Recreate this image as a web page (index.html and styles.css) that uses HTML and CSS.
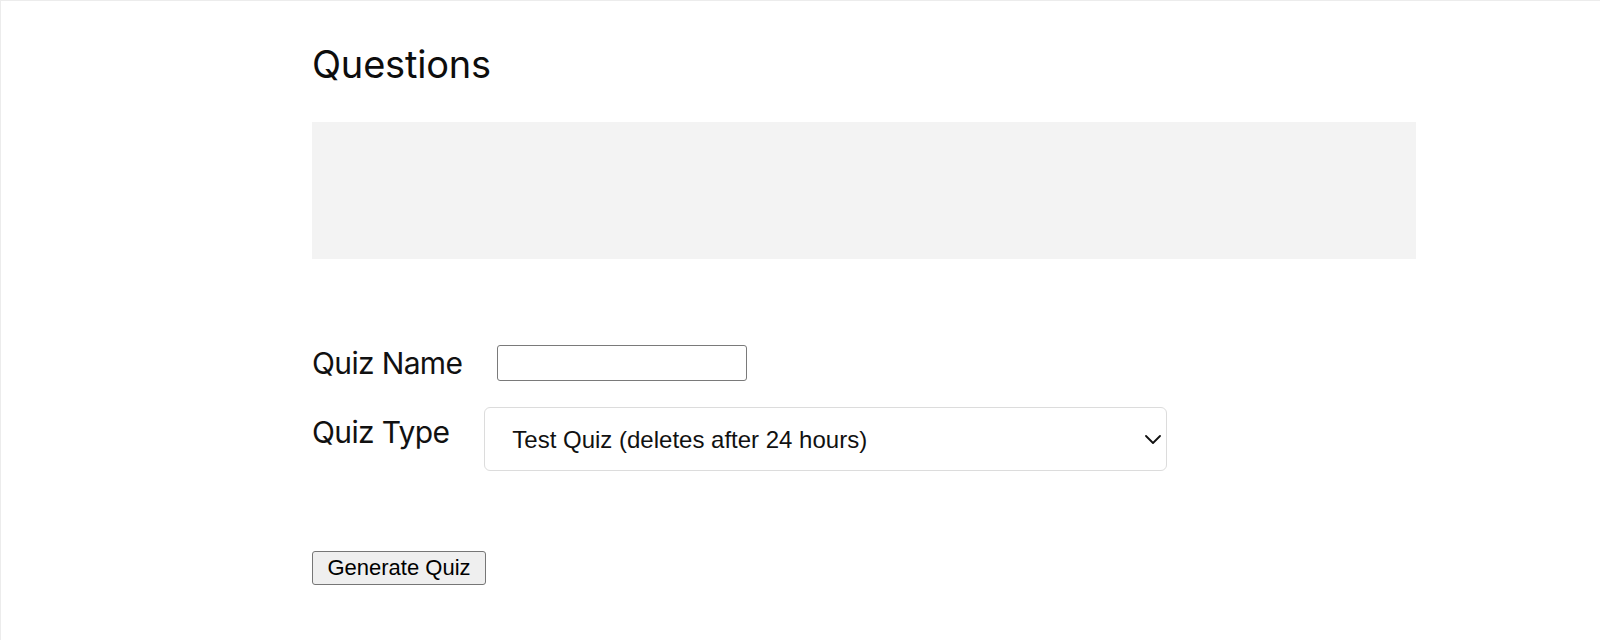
FILE: index.html
```html
<!DOCTYPE html>
<html lang="en">
<head>
<meta charset="utf-8">
<title>Questions</title>
<link rel="stylesheet" href="styles.css">
</head>
<body>
<main class="page">
  <h1 class="title">Questions</h1>
  <div class="questions-box"></div>
  <form class="quiz-form">
    <div class="field field-name">
      <label class="field-label" for="quiz-name">Quiz Name</label>
      <input class="text-input" id="quiz-name" type="text">
    </div>
    <div class="field field-type">
      <label class="field-label" for="quiz-type">Quiz Type</label>
      <div class="select-wrap">
        <select class="select" id="quiz-type">
          <option>Test Quiz (deletes after 24 hours)</option>
          <option>Permanent Quiz</option>
        </select>
        <svg class="chevron" width="16" height="9" viewBox="0 0 16 9" aria-hidden="true">
          <path d="M1 1 L8 8 L15 1" fill="none" stroke="#111" stroke-width="1.8" stroke-linecap="round" stroke-linejoin="round"/>
        </svg>
      </div>
    </div>
    <button class="btn" type="button">Generate Quiz</button>
  </form>
</main>
</body>
</html>
```

FILE: styles.css
```css
* { box-sizing: border-box; }

html, body {
  margin: 0;
  height: 100%;
  background: #fff;
}

body {
  border-top: 1px solid #ececec;
  border-left: 1px solid #ececec;
  font-family: Inter, "Noto Sans", sans-serif;
  color: #111;
}

.page {
  padding-left: 311px;
  width: 1415px;
}

.title {
  margin: 40px 0 0;
  font-size: 38px;
  line-height: 46px;
  font-weight: 400;
  letter-spacing: -0.2px;
  color: #0d0d0d;
}

.questions-box {
  margin-top: 35px;
  height: 137px;
  background: #f3f3f3;
}

.quiz-form {
  margin-top: 86px;
}

.field {
  display: flex;
  gap: 35px;
}

.field-name {
  align-items: center;
}

.field-type {
  margin-top: 22px;
  align-items: flex-start;
}

.field-label {
  font-size: 30px;
  line-height: 36px;
  font-weight: 400;
  letter-spacing: -0.65px;
  color: #111;
}

.field-type .field-label {
  margin-top: 11px;
}

.text-input {
  width: 250px;
  height: 36px;
  border: 1px solid #7a7a7a;
  border-radius: 3px;
  padding: 0 6px;
  font-family: "Liberation Sans", Arial, sans-serif;
  font-size: 20px;
  background: #fff;
}

.select-wrap {
  position: relative;
  margin-top: 4px;
}

.select {
  appearance: none;
  -webkit-appearance: none;
  width: 683px;
  height: 64px;
  border: 1px solid #dcdcdc;
  border-radius: 6px;
  background: #fff;
  padding: 0 40px 0 27px;
  font-family: "Liberation Sans", Arial, sans-serif;
  font-size: 24px;
  color: #111;
}

.chevron {
  position: absolute;
  right: 6px;
  top: 28px;
}

.btn {
  display: block;
  margin-top: 80px;
  height: 34px;
  width: 174px;
  padding: 0;
  border: 1px solid #767676;
  border-radius: 3px;
  background: #efefef;
  font-family: "Liberation Sans", Arial, sans-serif;
  font-size: 22px;
  color: #000;
}
```
